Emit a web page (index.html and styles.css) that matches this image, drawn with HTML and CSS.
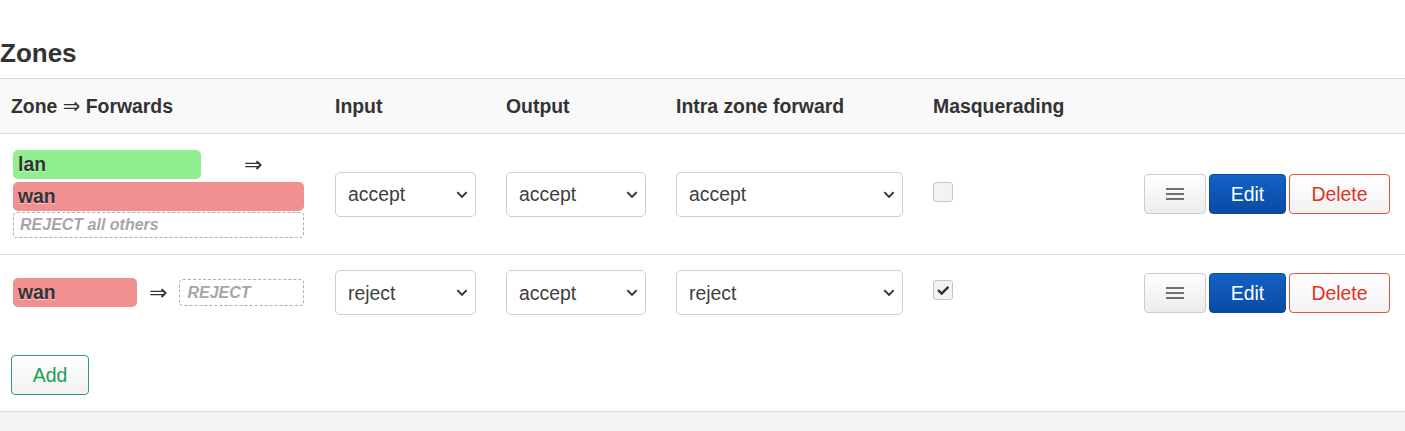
FILE: index.html
```html
<!DOCTYPE html>
<html lang="en">
<head>
<meta charset="utf-8">
<title>Zones</title>
<link rel="stylesheet" href="styles.css">
</head>
<body>
<div class="section">
  <h3 class="title">Zones</h3>
  <div class="table">
    <div class="tr thead">
      <div class="th">Zone <span class="h-arrow">⇒</span> Forwards</div>
      <div class="th">Input</div>
      <div class="th">Output</div>
      <div class="th">Intra zone forward</div>
      <div class="th">Masquerading</div>
      <div class="th"></div>
    </div>

    <div class="tr row row-lan">
      <div class="td td-zone">
        <div class="fw-stack">
          <div class="fw-line">
            <span class="badge lan w-lan">lan</span>
            <span class="arrow arrow-wide">⇒</span>
          </div>
          <span class="badge wan w-full gap3">wan</span>
          <span class="reject w-full gap1">REJECT all others</span>
        </div>
      </div>
      <div class="td"><div class="sel w-in"><select><option>accept</option></select><svg class="chev" viewBox="0 0 10 6"><path d="M1 1 L5 5 L9 1"/></svg></div></div>
      <div class="td"><div class="sel w-out"><select><option>accept</option></select><svg class="chev" viewBox="0 0 10 6"><path d="M1 1 L5 5 L9 1"/></svg></div></div>
      <div class="td"><div class="sel w-intra"><select><option>accept</option></select><svg class="chev" viewBox="0 0 10 6"><path d="M1 1 L5 5 L9 1"/></svg></div></div>
      <div class="td"><span class="cb"></span></div>
      <div class="td td-act">
        <button class="btn btn-menu"><svg class="menu-ic" viewBox="0 0 18 12"><path d="M0 1 H18 M0 6 H18 M0 11 H18"/></svg></button>
        <button class="btn btn-edit">Edit</button>
        <button class="btn btn-del">Delete</button>
      </div>
    </div>

    <div class="tr row row-wan">
      <div class="td td-zone">
        <div class="fw-line">
          <span class="badge wan w-wan2">wan</span>
          <span class="arrow arrow-narrow">⇒</span>
          <span class="reject w-rej2">REJECT</span>
        </div>
      </div>
      <div class="td"><div class="sel w-in"><select><option>reject</option></select><svg class="chev" viewBox="0 0 10 6"><path d="M1 1 L5 5 L9 1"/></svg></div></div>
      <div class="td"><div class="sel w-out"><select><option>accept</option></select><svg class="chev" viewBox="0 0 10 6"><path d="M1 1 L5 5 L9 1"/></svg></div></div>
      <div class="td"><div class="sel w-intra"><select><option>reject</option></select><svg class="chev" viewBox="0 0 10 6"><path d="M1 1 L5 5 L9 1"/></svg></div></div>
      <div class="td"><span class="cb checked"><svg viewBox="0 0 20 20"><path d="M4.5 10 L8.5 14 L16 6.5"/></svg></span></div>
      <div class="td td-act">
        <button class="btn btn-menu"><svg class="menu-ic" viewBox="0 0 18 12"><path d="M0 1 H18 M0 6 H18 M0 11 H18"/></svg></button>
        <button class="btn btn-edit">Edit</button>
        <button class="btn btn-del">Delete</button>
      </div>
    </div>
  </div>
  <div class="create">
    <button class="btn btn-add">Add</button>
  </div>
</div>
<div class="footer"></div>
</body>
</html>
```

FILE: styles.css
```css
html, body {
  margin: 0;
  padding: 0;
  background: #fff;
}
body {
  font-family: "Liberation Sans", Arial, sans-serif;
  font-size: 19.4px;
  color: #404040;
  overflow: hidden;
}
.title {
  margin: 38px 0 10px 0;
  font-size: 26px;
  line-height: 30px;
  font-weight: bold;
  color: #333;
}
.tr {
  display: grid;
  grid-template-columns: 324px 171px 170px 257px 211px 1fr;
  align-items: center;
  box-sizing: border-box;
}
.thead {
  height: 56px;
  background: #f9f9f9;
  border-top: 1px solid #dcdcdc;
  border-bottom: 1px solid #dcdcdc;
}
.th {
  padding-left: 11px;
  font-weight: bold;
  color: #333;
  white-space: nowrap;
}
.h-arrow {
  font-family: "DejaVu Sans", sans-serif;
  font-weight: normal;
  font-size: 21px;
  line-height: 20px;
}
.row-lan {
  height: 121px;
  border-bottom: 1px solid #dcdcdc;
}
.row-wan {
  height: 75px;
}
.td {
  padding-left: 11px;
}
.td-zone {
  padding-left: 13px;
}
.fw-stack {
  display: flex;
  flex-direction: column;
  align-items: flex-start;
}
.fw-line {
  display: flex;
  align-items: center;
}
.badge {
  display: block;
  box-sizing: border-box;
  height: 29px;
  line-height: 29px;
  padding: 0 5px;
  border-radius: 5px;
  font-weight: bold;
  color: #333;
  text-shadow: 0 1px 1px rgba(255,255,255,0.6);
}
.lan { background: #90f090; }
.wan { background: #f09090; }
.w-lan { width: 188px; }
.w-full { width: 291px; }
.w-wan2 { width: 124px; }
.gap3 { margin-top: 3px; }
.gap1 { margin-top: 1px; }
.arrow {
  font-family: "DejaVu Sans", sans-serif;
  font-size: 22px;
  color: #333;
  line-height: 20px;
}
.arrow-wide { margin-left: 43px; }
.arrow-narrow { margin: 0 12px 0 12px; }
.reject {
  display: block;
  box-sizing: border-box;
  height: 26px;
  line-height: 24px;
  padding: 0 6px;
  border: 1px dashed #b0b0b0;
  border-radius: 4px;
  font-size: 16px;
  font-style: italic;
  font-weight: bold;
  color: #a6a6a6;
}
.w-rej2 {
  width: 125px;
  height: 27px;
  line-height: 25px;
  padding: 0 7px;
}
.sel {
  position: relative;
  height: 45px;
}
.w-in { width: 141px; }
.w-out { width: 140px; }
.w-intra { width: 227px; }
.sel select {
  appearance: none;
  -webkit-appearance: none;
  width: 100%;
  height: 45px;
  box-sizing: border-box;
  border: 1px solid #cfcfcf;
  border-radius: 5px;
  background: #fff;
  padding: 0 12px;
  font-family: "Liberation Sans", Arial, sans-serif;
  font-size: 19.4px;
  color: #404040;
}
.chev {
  position: absolute;
  right: 8px;
  top: 19px;
  width: 12px;
  height: 7px;
  fill: none;
  stroke: #333;
  stroke-width: 1.7;
  pointer-events: none;
}
.cb {
  display: block;
  box-sizing: border-box;
  width: 20px;
  height: 20px;
  border: 1px solid #c6c6c6;
  border-radius: 3px;
  background: #f3f3f3;
  margin-bottom: 5px;
}
.cb svg {
  display: block;
  width: 18px;
  height: 18px;
  fill: none;
  stroke: #2e2e2e;
  stroke-width: 2.6;
}
.td-act {
  display: flex;
  justify-content: flex-end;
  gap: 3px;
  padding-right: 15px;
}
.btn {
  box-sizing: border-box;
  height: 40px;
  padding: 0 21px;
  border-radius: 4px;
  font-family: "Liberation Sans", Arial, sans-serif;
  font-size: 19.4px;
  line-height: 38px;
  cursor: pointer;
}
.btn-menu {
  width: 62px;
  padding: 0;
  border: 1px solid #cccccc;
  background: linear-gradient(#ffffff, #ececec);
  display: flex;
  align-items: center;
  justify-content: center;
}
.menu-ic {
  width: 18px;
  height: 12px;
  fill: none;
  stroke: #444;
  stroke-width: 1.4;
}
.btn-edit {
  width: 77px;
  padding: 0;
  border: 1px solid #0a4ba3;
  background: linear-gradient(#1262c6, #0a4aa2);
  color: #fff;
}
.btn-del {
  width: 101px;
  padding: 0;
  border: 1px solid #e0533f;
  background: linear-gradient(#ffffff, #f2f2f2);
  color: #e0301e;
}
.create {
  padding: 25px 0 16px 11px;
}
.btn-add {
  display: block;
  width: 78px;
  padding: 0;
  border: 1px solid #2e9e6d;
  background: linear-gradient(#ffffff, #f1f1f1);
  color: #1d9c58;
}
.footer {
  height: 40px;
  background: #f4f4f4;
  border-top: 1px solid #dcdcdc;
}
```
